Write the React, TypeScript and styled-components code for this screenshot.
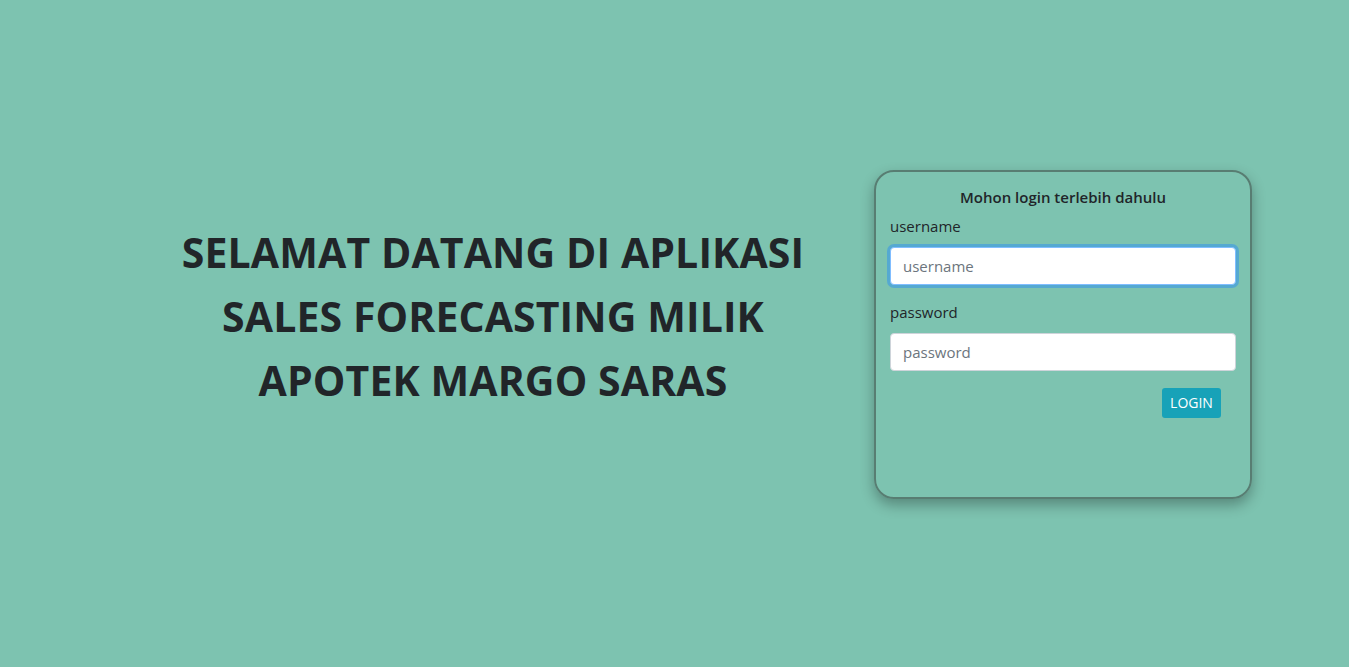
import React from "react";
import styled, { createGlobalStyle } from "styled-components";

const Global = createGlobalStyle`
  html, body { margin: 0; padding: 0; }
  body {
    background: #7dc3b0;
    font-family: "Open Sans", "Noto Sans", sans-serif;
    color: #212529;
  }
  * { box-sizing: border-box; }
`;

const Page = styled.div`
  height: 667px;
  display: flex;
  align-items: center;
`;

const Intro = styled.div`
  flex: 0 0 874px;
  padding-left: 112px;
  padding-bottom: 36px;
  text-align: center;
`;

const Heading = styled.h1`
  margin: 0;
  font-size: 41px;
  font-weight: 700;
  line-height: 64px;
  letter-spacing: 0.1px;
  color: #212529;
`;

const Card = styled.form`
  width: 378px;
  height: 329px;
  margin-top: 1px;
  border: 2px solid #587d72;
  border-radius: 20px;
  box-shadow: 0 6px 14px rgba(0, 0, 0, 0.3);
  padding: 14px 14px 0 14px;
  display: flex;
  flex-direction: column;
`;

const Title = styled.div`
  text-align: center;
  font-size: 15px;
  font-weight: 600;
  line-height: 22px;
  margin-bottom: 7px;
`;

const Label = styled.label`
  font-size: 15px;
  line-height: 22px;
  margin-bottom: 10px;
`;

const Input = styled.input<{ $focus?: boolean }>`
  width: 346px;
  height: 38px;
  border: 1px solid ${(p) => (p.$focus ? "#80bdff" : "#ced4da")};
  border-radius: 4px;
  background: #fff;
  padding: 6px 12px;
  font-family: inherit;
  font-size: 15px;
  color: #495057;
  outline: none;
  box-shadow: ${(p) => (p.$focus ? "0 0 0 3px rgba(72, 160, 220, 0.75)" : "none")};
  margin-bottom: 16px;
  &::placeholder { color: #6c757d; }
`;

const Actions = styled.div`
  display: flex;
  justify-content: flex-end;
  padding-right: 15px;
  margin-top: 1px;
`;

const Button = styled.button`
  background: #17a2b8;
  color: #fff;
  border: none;
  border-radius: 3px;
  font-family: inherit;
  font-size: 14px;
  height: 30px;
  width: 59px;
  padding: 0;
`;

export default function App() {
  return (
    <>
      <Global />
      <Page>
        <Intro>
          <Heading>
            SELAMAT DATANG DI APLIKASI
            <br />
            SALES FORECASTING MILIK
            <br />
            APOTEK MARGO SARAS
          </Heading>
        </Intro>
        <Card onSubmit={(e) => e.preventDefault()}>
          <Title>Mohon login terlebih dahulu</Title>
          <Label>username</Label>
          <Input $focus placeholder="username" />
          <Label>password</Label>
          <Input type="password" placeholder="password" />
          <Actions>
            <Button type="submit">LOGIN</Button>
          </Actions>
        </Card>
      </Page>
    </>
  );
}
